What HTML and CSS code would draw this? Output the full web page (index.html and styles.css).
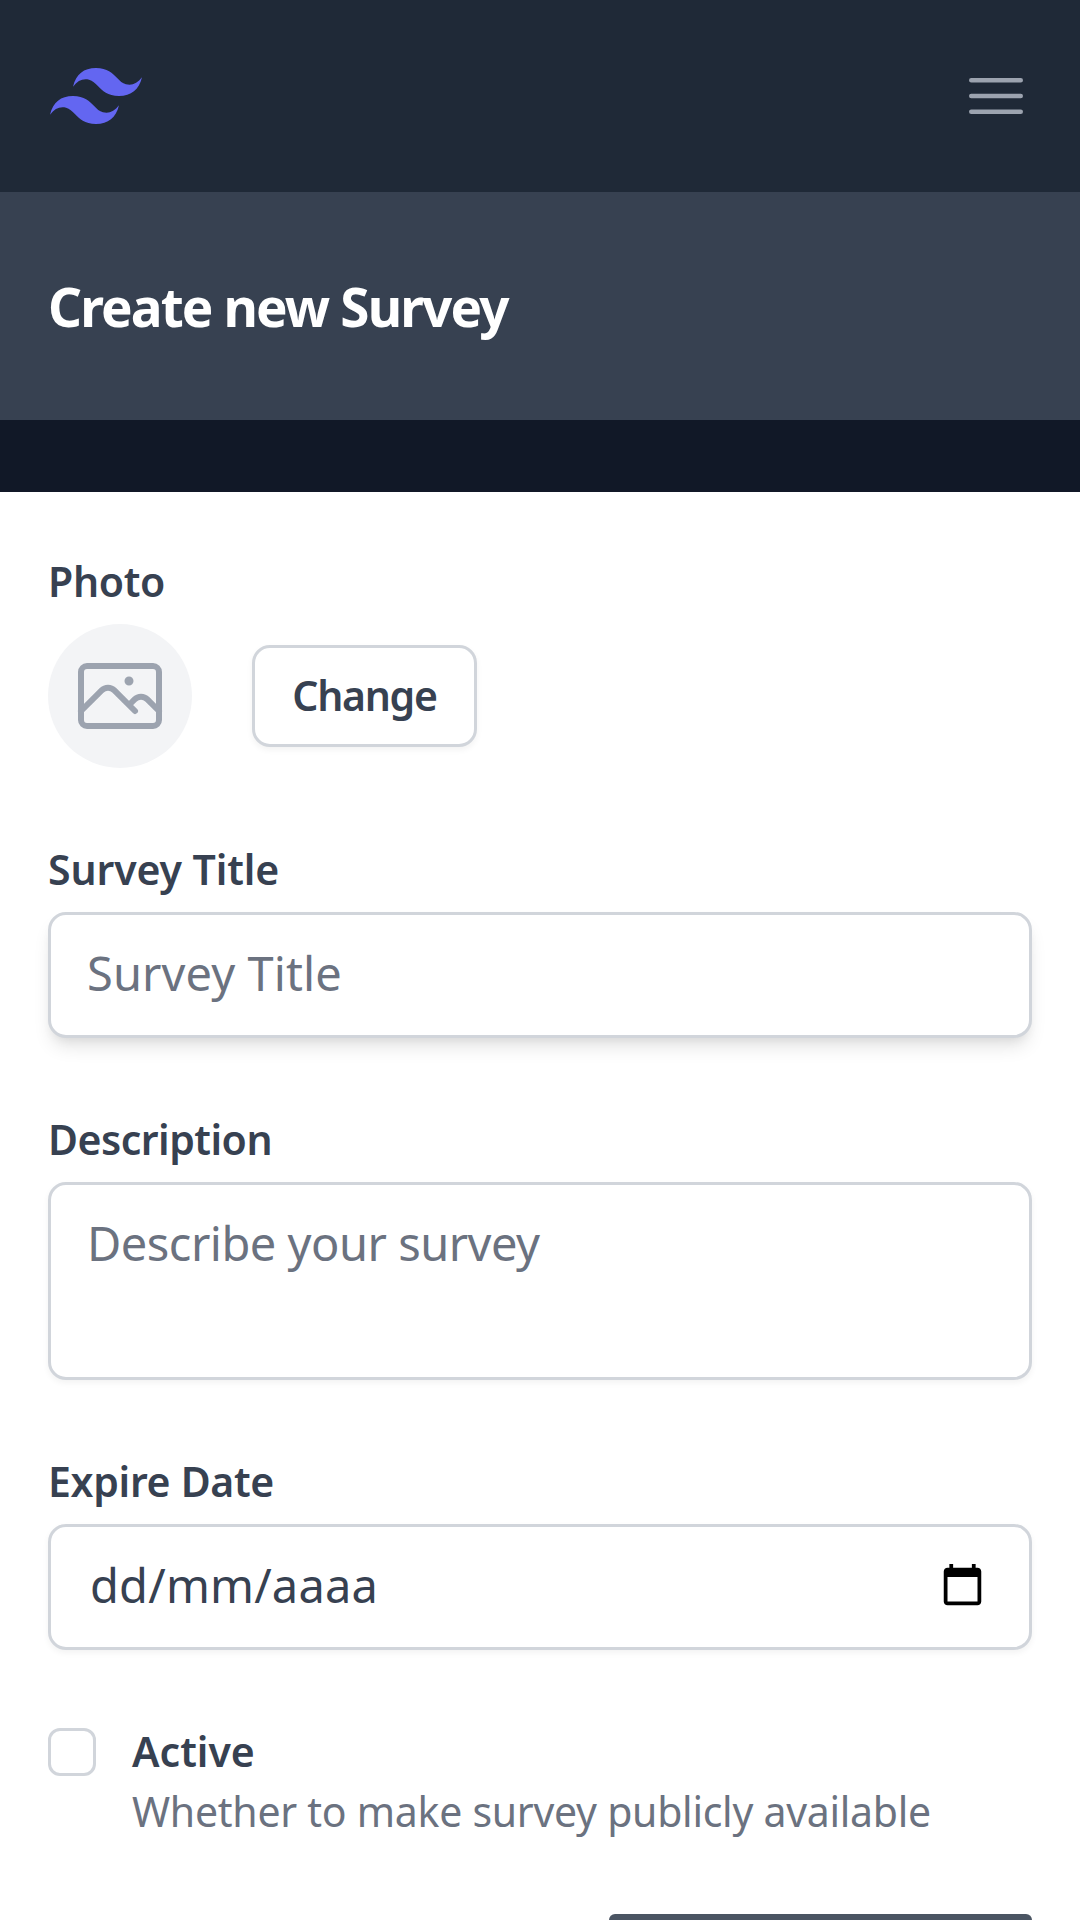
FILE: index.html
```html
<!DOCTYPE html>
<html lang="en">
<head>
<meta charset="utf-8">
<title>Create new Survey</title>
<link rel="stylesheet" href="styles.css">
</head>
<body>
<nav class="nav">
  <svg class="logo" viewBox="2 6.036 20 11.928" preserveAspectRatio="none"><path d="M12 6.036c-2.667 0-4.333 1.325-5 3.976 1-1.325 2.167-1.822 3.5-1.491.761.189 1.305.738 1.906 1.345C13.387 10.855 14.522 12 17 12c2.667 0 4.333-1.325 5-3.976-1 1.325-2.166 1.822-3.5 1.491-.761-.189-1.305-.738-1.907-1.345-.98-.99-2.114-2.134-4.593-2.134zM7 12c-2.667 0-4.333 1.325-5 3.976 1-1.326 2.167-1.822 3.5-1.491.761.189 1.305.738 1.907 1.345.98.989 2.115 2.134 4.594 2.134 2.666 0 4.333-1.325 5-3.976-1 1.325-2.167 1.822-3.5 1.491-.761-.189-1.306-.738-1.907-1.345C10.613 13.145 9.478 12 7 12z"/></svg>
  <svg class="burger" viewBox="0 0 24 24"><path d="M3.75 6.75h16.5M3.75 12h16.5m-16.5 5.25h16.5"/></svg>
</nav>
<header class="header"><h1 class="heading">Create new Survey</h1></header>
<main class="main">
  <form class="card">
    <div class="field">
      <span class="label label-photo">Photo</span>
      <div class="photo-row">
        <span class="avatar"><svg class="photo-icon" viewBox="0 0 24 24"><path d="M2.25 15.75l5.159-5.159a2.25 2.25 0 013.182 0l5.159 5.159m-1.5-1.5l1.409-1.409a2.25 2.25 0 013.182 0l2.909 2.909m-18 3.75h16.5a1.5 1.5 0 001.5-1.5V6a1.5 1.5 0 00-1.5-1.5H3.75A1.5 1.5 0 002.25 6v12a1.5 1.5 0 001.5 1.5zm10.5-11.25h.008v.008h-.008V8.25zm.375 0a.375.375 0 11-.75 0 .375.375 0 01.75 0z"/></svg></span>
        <button class="change" type="button">Change</button>
      </div>
    </div>
    <div class="field">
      <label class="label label-title" for="title">Survey Title</label>
      <input class="control control-title" id="title" placeholder="Survey Title">
    </div>
    <div class="field">
      <label class="label label-description" for="description">Description</label>
      <textarea class="control control-area" id="description" placeholder="Describe your survey"></textarea>
    </div>
    <div class="field">
      <span class="label label-expire">Expire Date</span>
      <div class="control control-date">
        <span>dd/mm/aaaa</span>
        <svg class="calendar" viewBox="0 0 24 24"><path d="M20 3h-1V1h-2v2H7V1H5v2H4c-1.1 0-2 .9-2 2v16c0 1.1.9 2 2 2h16c1.1 0 2-.9 2-2V5c0-1.1-.9-2-2-2zm0 18H4V8h16v13z"/></svg>
      </div>
    </div>
    <div class="check-row">
      <input class="checkbox" type="checkbox" id="active">
      <div class="check-text">
        <label class="label label-active" for="active">Active</label>
        <p class="hint">Whether to make survey publicly available</p>
      </div>
    </div>
    <button class="add" type="button" aria-label="Add question"></button>
  </form>
</main>
</body>
</html>
```
FILE: styles.css
```css
* { box-sizing: border-box; }
body {
  margin: 0;
  height: 1920px;
  overflow: hidden;
  background: #fff;
  color: #374151;
  font-family: "Noto Sans", "Open Sans", sans-serif;
}
.nav {
  display: flex;
  align-items: center;
  justify-content: space-between;
  height: 192px;
  padding: 0 48px;
  background: #1f2937;
}
.logo { width: 92px; height: 56px; margin-left: 2px; fill: #6366f1; }
.burger { width: 72px; height: 72px; fill: none; stroke: #9ca3af; stroke-width: 1.5; stroke-linecap: round; }
.header {
  display: flex;
  align-items: center;
  height: 228px;
  padding: 2px 48px 0;
  background: #374151;
}
.heading { margin: 0; color: #fff; font-size: 53px; line-height: 84px; font-weight: 700; letter-spacing: -1.85px; white-space: nowrap; }
.main { padding-top: 72px; background: #111827; }
.card {
  display: flex;
  flex-direction: column;
  gap: 72px;
  height: 1500px;
  padding: 60px 48px;
  background: #fff;
}
.field { display: flex; flex-direction: column; align-items: flex-start; gap: 12px; }
.label { height: 60px; font-size: 41px; line-height: 58px; font-weight: 600; white-space: nowrap; }
.label-photo { letter-spacing: -.3px; }
.label-title { letter-spacing: -.1px; }
.label-description { letter-spacing: -.5px; }
.label-expire { letter-spacing: -.3px; }
.label-active { letter-spacing: 0; }
.photo-row { display: flex; align-items: center; gap: 60px; }
.avatar {
  display: flex;
  align-items: center;
  justify-content: center;
  width: 144px;
  height: 144px;
  border-radius: 50%;
  background: #f3f4f6;
}
.photo-icon { width: 96px; height: 96px; fill: none; stroke: #9ca3af; stroke-width: 1.5; stroke-linecap: round; stroke-linejoin: round; }
.change {
  width: 225px;
  height: 102px;
  padding: 0 0 2px;
  border: 3px solid #d1d5db;
  border-radius: 18px;
  background: #fff;
  box-shadow: 0 3px 6px rgba(0, 0, 0, .05);
  color: #374151;
  font: 600 41px/60px "Noto Sans", sans-serif;
  letter-spacing: -1.3px;
}
.control {
  display: block;
  width: 984px;
  height: 126px;
  margin: 0;
  padding: 22px 36px 26px;
  border: 3px solid #d1d5db;
  border-radius: 18px;
  background: #fff;
  box-shadow: 0 3px 6px rgba(0, 0, 0, .05);
  color: #374151;
  font: 400 47px/72px "Noto Sans", sans-serif;
  resize: none;
}
.control::placeholder { color: #6b7280; opacity: 1; }
.control-title { letter-spacing: .1px; box-shadow: 0 12px 18px -3px rgba(0, 0, 0, .1), 0 6px 12px -6px rgba(0, 0, 0, .1); }
.control-area { height: 198px; letter-spacing: -.5px; }
.control-date { display: flex; align-items: center; justify-content: space-between; padding: 0 44px 5px 39px; letter-spacing: .2px; }
.calendar { width: 45px; height: 45px; fill: #000; }
.check-row { display: flex; align-items: flex-start; gap: 36px; }
.checkbox {
  appearance: none;
  width: 48px;
  height: 48px;
  margin: 6px 0 0;
  border: 3px solid #d1d5db;
  border-radius: 12px;
  background: #fff;
}
.check-text { display: flex; flex-direction: column; align-items: flex-start; }
.hint { height: 60px; margin: 0; color: #6b7280; font-size: 41px; line-height: 58px; letter-spacing: -.27px; white-space: nowrap; }
.add {
  align-self: flex-end;
  flex: none;
  width: 423px;
  height: 96px;
  border: 0;
  border-radius: 6px;
  background: #4b5563;
}
```
